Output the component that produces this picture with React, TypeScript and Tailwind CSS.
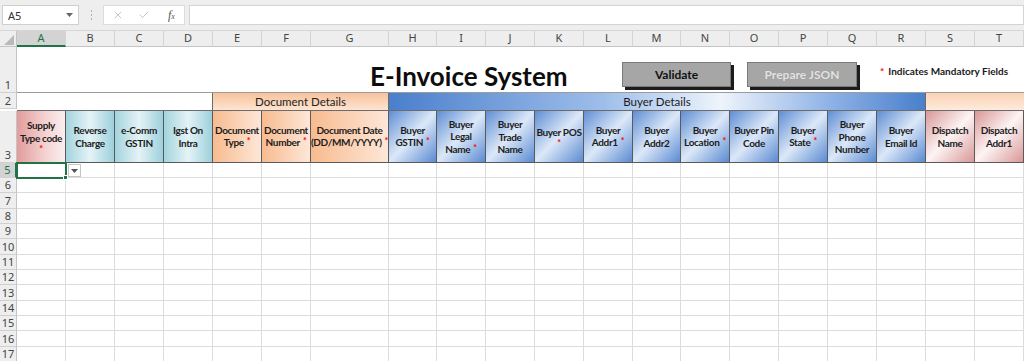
import { X, Check } from 'lucide-react';

type HeadCell = { lines: string[]; star?: 'inline' | 'line'; kind: 'pink' | 'teal' | 'orange' | 'blue' | 'rose' };

const letters = ['A', 'B', 'C', 'D', 'E', 'F', 'G', 'H', 'I', 'J', 'K', 'L', 'M', 'N', 'O', 'P', 'Q', 'R', 'S', 'T'];

const heads: HeadCell[] = [
  { lines: ['Supply', 'Type code'], star: 'line', kind: 'pink' },
  { lines: ['Reverse', 'Charge'], kind: 'teal' },
  { lines: ['e-Comm', 'GSTIN'], kind: 'teal' },
  { lines: ['Igst On', 'Intra'], kind: 'teal' },
  { lines: ['Document', 'Type'], star: 'inline', kind: 'orange' },
  { lines: ['Document', 'Number'], star: 'inline', kind: 'orange' },
  { lines: ['Document Date', '(DD/MM/YYYY)'], star: 'inline', kind: 'orange' },
  { lines: ['Buyer', 'GSTIN'], star: 'inline', kind: 'blue' },
  { lines: ['Buyer', 'Legal', 'Name'], star: 'inline', kind: 'blue' },
  { lines: ['Buyer', 'Trade', 'Name'], kind: 'blue' },
  { lines: ['Buyer POS'], star: 'line', kind: 'blue' },
  { lines: ['Buyer', 'Addr1'], star: 'inline', kind: 'blue' },
  { lines: ['Buyer', 'Addr2'], kind: 'blue' },
  { lines: ['Buyer', 'Location'], star: 'inline', kind: 'blue' },
  { lines: ['Buyer Pin', 'Code'], kind: 'blue' },
  { lines: ['Buyer', 'State'], star: 'inline', kind: 'blue' },
  { lines: ['Buyer', 'Phone', 'Number'], kind: 'blue' },
  { lines: ['Buyer', 'Email Id'], kind: 'blue' },
  { lines: ['Dispatch', 'Name'], kind: 'rose' },
  { lines: ['Dispatch', 'Addr1'], kind: 'rose' },
];

const kindClass: Record<HeadCell['kind'], string> = {
  pink: 'bg-[linear-gradient(to_right,#e39c9c,#f4d3d3_60%,#fbeeee)]',
  teal: 'bg-[linear-gradient(to_right,#a3d4de,#e4f3f6_50%,#9dd0dc)]',
  orange: 'bg-[linear-gradient(to_right,#f8bb8f,#fde7d8)]',
  blue: 'bg-[linear-gradient(to_bottom_right,#5f8ed4,#dce8f8_50%,#5a8bd2)]',
  rose: 'bg-[linear-gradient(to_bottom_right,#d99797,#fdf4f4_50%,#d99797)]',
};

const Star = () => <span className="text-[#ff0000] text-[9px] relative -top-[2px] ml-[3px]">*</span>;

const bodyRows = [
  { n: 5, h: 'h-[15px]' },
  { n: 6, h: 'h-[15px]' },
  { n: 7, h: 'h-[16px]' },
  { n: 8, h: 'h-[15px]' },
  { n: 9, h: 'h-[15px]' },
  { n: 10, h: 'h-[16px]' },
  { n: 11, h: 'h-[15px]' },
  { n: 12, h: 'h-[15px]' },
  { n: 13, h: 'h-[16px]' },
  { n: 14, h: 'h-[15px]' },
  { n: 15, h: 'h-[15px]' },
  { n: 16, h: 'h-[16px]' },
  { n: 17, h: 'h-[15px]' },
];

function TopBar() {
  return (
    <div className="h-[31px] bg-[#eeeeee] flex pt-[5px] pl-[2px] border-b border-[#d6d6d6]">
      <div className="w-[77px] h-[20px] bg-white border border-[#cfcfcf] flex items-center justify-between pl-[5px] pr-[5px]">
        <span className="text-[11px] text-[#333] font-['Noto_Sans',sans-serif] leading-none">A5</span>
        <svg width="7" height="4" viewBox="0 0 7 4"><path d="M0 0h7L3.5 4z" fill="#666" /></svg>
      </div>
      <div className="w-[24px] h-[20px] flex flex-col items-center justify-center gap-[2px]">
        <div className="w-[1px] h-[2px] bg-[#b0b0b0]" />
        <div className="w-[1px] h-[2px] bg-[#b0b0b0]" />
        <div className="w-[1px] h-[2px] bg-[#b0b0b0]" />
      </div>
      <div className="w-[82px] h-[20px] bg-white border border-[#dcdcdc] flex items-center pl-[8px]">
        <X size={12} strokeWidth={1.3} color="#a8a8a8" />
        <Check size={12} strokeWidth={1.3} color="#a8a8a8" className="ml-[14px]" />
        <span className="ml-[18px] italic font-['Liberation_Serif',serif] text-[12px] text-[#555] leading-none">
          f<span className="text-[8px]">x</span>
        </span>
      </div>
      <div className="w-[4px]" />
      <div className="flex-1 h-[20px] bg-white border border-[#d3d3d3]" />
    </div>
  );
}

function RowHead({ label, active, cls }: { label: string; active?: boolean; cls?: string }) {
  return (
    <div
      className={`flex items-end justify-center text-[11px] leading-[14px] font-['Noto_Sans',sans-serif] border-b border-[#d0d0d0] ${
        active
          ? 'bg-[#d3d3d3] text-[#217346] border-r-2 border-r-[#217346]'
          : 'bg-[#eeeeee] text-[#444] border-r border-r-[#c4c4c4]'
      } ${cls ?? ''}`}
    >
      {label}
    </div>
  );
}

function Sheet() {
  return (
    <div className="grid grid-cols-[17px_repeat(6,49px)_78px_48px_repeat(4,49px)_48px_repeat(7,49px)] font-['Lato',sans-serif]">
      {/* column letters */}
      <div className="h-[16px] bg-[#eeeeee] border-r border-b border-[#c4c4c4] flex items-end justify-end pr-[2px] pb-[1px]">
        <svg width="10" height="10" viewBox="0 0 10 10"><polygon points="10,0 10,10 0,10" fill="#b9b9b9" /></svg>
      </div>
      {letters.map((l, i) => (
        <div
          key={l}
          className={`h-[16px] flex items-center justify-center text-[11px] font-['Noto_Sans',sans-serif] border-r border-r-[#d4d4d4] ${
            i === 0 ? 'bg-[#d3d3d3] text-[#217346] border-b-2 border-b-[#217346]' : 'bg-[#eeeeee] text-[#444] border-b border-b-[#c4c4c4]'
          }`}
        >
          {l}
        </div>
      ))}

      {/* row 1 */}
      <RowHead label="1" cls="h-[46px]" />
      <div className="col-span-20 h-[46px] bg-white border-b border-[#9c9c9c] grid grid-cols-[353px_252px_125px_133px_1fr]">
        <div />
        <div className="self-end mb-[3px] text-[26px] leading-none font-bold text-[#0d0d0d] whitespace-nowrap">E-Invoice System</div>
        <div className="pt-[15px]">
          <div className="w-[109px] h-[25px] bg-[#a6a6a6] border border-[#7a7a7a] shadow-[3px_3px_0_#1c1c1c] flex items-center justify-center text-[12px] font-bold text-[#111]">
            Validate
          </div>
        </div>
        <div className="pt-[15px]">
          <div className="w-[110px] h-[25px] bg-[#a6a6a6] border border-[#7a7a7a] shadow-[3px_3px_0_#1c1c1c] flex items-center justify-center text-[12px] font-bold text-[#e4e4e4] [text-shadow:0_0_1px_#8a8a8a]">
            Prepare JSON
          </div>
        </div>
        <div className="pt-[17px] text-[10px] font-bold text-[#1a1a1a] whitespace-nowrap leading-[14px]">
          <span className="text-[#ff0000] mr-[4px]">*</span>Indicates Mandatory Fields
        </div>
      </div>

      {/* row 2 */}
      <RowHead label="2" cls="h-[16px]" />
      <div className="col-span-4 bg-white border-b border-r border-[#6b6b6b]" />
      <div className="col-span-3 flex items-center justify-center text-[11.5px] text-[#222] border-b border-r border-[#6b6b6b] bg-[linear-gradient(to_bottom,#f8c29b,#fde4d2)]">
        Document Details
      </div>
      <div className="col-span-11 flex items-center justify-center text-[11.5px] text-[#1a1a1a] border-b border-r border-[#6b6b6b] bg-[linear-gradient(to_right,#4a7fcc,#9ebeea_40%,#eef4fb_62%,#8fb3e6_82%,#4a7fcc)]">
        Buyer Details
      </div>
      <div className="col-span-2 border-b border-[#6b6b6b] bg-[linear-gradient(to_bottom,#fbd2b4,#fdebdd)]" />

      {/* row 3 */}
      <RowHead label="3" cls="h-[52px]" />
      {heads.map((h, i) => (
        <div
          key={i}
          className={`flex flex-col items-center justify-center text-center text-[10px] leading-[12.5px] font-bold text-[#1c1c1c] border-r border-b border-[#5a5a5a] whitespace-nowrap tracking-[-0.35px] ${kindClass[h.kind]}`}
        >
          {h.lines.map((ln, j) => (
            <div key={j}>
              {ln}
              {h.star === 'inline' && j === h.lines.length - 1 && <Star />}
            </div>
          ))}
          {h.star === 'line' && (
            <div className="text-[#ff0000] text-[9px] leading-[10px]">*</div>
          )}
        </div>
      ))}

      {/* body rows */}
      {bodyRows.map((r) => (
        <BodyRow key={r.n} n={r.n} h={r.h} />
      ))}
    </div>
  );
}

function BodyRow({ n, h }: { n: number; h: string }) {
  const active = n === 5;
  return (
    <>
      <RowHead label={String(n)} active={active} cls={h} />
      {letters.map((l, i) => (
        <div key={l} className={`${h} bg-white border-r border-b border-[#dcdcdc] relative`}>
          {active && i === 0 && (
            <>
              <div className="absolute -top-[1px] -left-[1px] w-[51px] h-[17px] border-2 border-[#217346] z-10" />
              <div className="absolute -bottom-[3px] -right-[3px] w-[5px] h-[5px] bg-[#217346] border border-white z-20" />
              <div className="absolute top-[1px] left-[51px] w-[13px] h-[13px] bg-white border border-[#c6c6c6] z-20 flex items-center justify-center">
                <svg width="7" height="4" viewBox="0 0 7 4"><path d="M0 0h7L3.5 4z" fill="#555" /></svg>
              </div>
            </>
          )}
        </div>
      ))}
    </>
  );
}

export default function App() {
  return (
    <div className="w-[1024px] h-[361px] overflow-hidden bg-white">
      <TopBar />
      <Sheet />
    </div>
  );
}
